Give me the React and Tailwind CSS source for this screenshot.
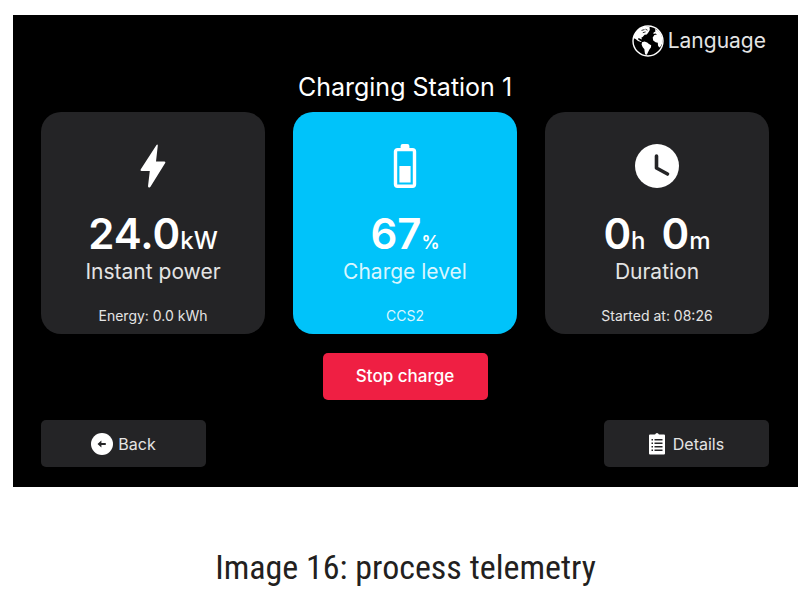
import React from 'react';

function GlobeIcon() {
  return (
    <svg viewBox="0 0 32 32" className="size-8" aria-hidden="true">
      <circle cx="16" cy="16" r="15" fill="#000" stroke="#fff" strokeWidth="1.4" />
      <g fill="#fff">
        <path d="M2 10.500C4 5.500 8 2.500 13 1.400L17.500 1.800 17.800 5 16.500 7.200 14.800 9.600 12.600 9.800 10.600 12 9.400 12.600 9.900 14.400 8.200 13.800 6.600 13 6 14.200 7.600 15.400 9.600 16.400 9 17 6 16 3.600 14 1.800 13.200Z" />
        <path d="M10 17.200 12.500 16.600 15.200 17.600 17 19 19.200 20.200 18.900 22.600 17.400 24.600 16 27.200 14.900 29.800 13.200 29.600 12.700 27 12.400 24.200 10.600 22 9.600 19.600Z" />
        <path d="M23 4 26 5.400C28.600 8 30.400 11 30.500 15L30.200 18.500 28.600 21.500 27.200 22.600 26 20.400 25.800 17.800 23.600 17.200 21.200 15.600 20.700 12.600 22.400 10 25 9.600 23.600 8.500 21.400 9 21.600 7.400 23.400 6.400Z" />
      </g>
      <path d="M9.500 5.400 12.500 4.600M10.800 7.700 13.600 6.900M13.500 4.200 15.500 5.200" stroke="#000" strokeWidth="0.8" fill="none" />
    </svg>
  );
}

function BoltIcon() {
  return (
    <svg viewBox="0 0 44 44" className="size-11" aria-hidden="true">
      <path d="M25.500 1 9.800 25.200Q9 27 10.600 27H18.800L17 42.300Q17.400 44.300 19.300 43L34.200 19Q34.800 17.400 33.200 17.400H25L26.800 1.600Q26.700 0 25.500 1Z" fill="#fff" />
    </svg>
  );
}

function BatteryIcon() {
  return (
    <svg viewBox="0 0 44 44" className="size-11" aria-hidden="true">
      <path d="M19.600 0H24.400Q26.400 0 26.400 2V5H17.600V2Q17.600 0 19.600 0Z" fill="#fff" />
      <rect x="12.500" y="5.600" width="19" height="36.700" rx="2" fill="none" stroke="#fff" strokeWidth="3.400" />
      <rect x="16.400" y="22" width="11.200" height="16.500" fill="#fff" />
    </svg>
  );
}

function ClockIcon() {
  return (
    <svg viewBox="0 0 44 44" className="size-11" aria-hidden="true">
      <circle cx="22" cy="22" r="22" fill="#fff" />
      <path d="M21.500 12V24L32.500 30" fill="none" stroke="#242426" strokeWidth="3.600" strokeLinecap="round" strokeLinejoin="round" />
    </svg>
  );
}

function BackIcon() {
  return (
    <svg viewBox="0 0 22 22" className="size-[22px]" aria-hidden="true">
      <circle cx="11" cy="11" r="11" fill="#fff" />
      <path d="M6.500 11 10.400 7.600V9.900H14.500Q15.600 11 14.500 12.100H10.400V14.400Z" fill="#242426" />
    </svg>
  );
}

function DetailsIcon() {
  return (
    <svg viewBox="0 0 16 22" className="h-[22px] w-4" aria-hidden="true">
      <path d="M1 1.500H5.500Q6.500 1.500 6.800 0.500Q8 -0.500 9.200 0.500Q9.500 1.500 10.500 1.500H15Q16 1.500 16 2.500V20.500Q16 21.500 15 21.500H1Q0 21.500 0 20.500V2.500Q0 1.500 1 1.500Z" fill="#fff" />
      <path d="M5.500 6.700H13.500M5.500 10.200H13.500M5.500 13.700H13.500M5.500 17.200H13.500M2.500 6.700H4M2.500 10.200H4M2.500 13.700H4M2.500 17.200H4" stroke="#242426" strokeWidth="1.500" />
    </svg>
  );
}

const cards = [
  {
    label: 'Instant power',
    parts: [{ value: '24.0', unit: 'kW' }],
    note: 'Energy: 0.0 kWh',
    icon: <BoltIcon />,
  },
  {
    label: 'Charge level',
    parts: [{ value: '67', unit: '%' }],
    note: 'CCS2',
    icon: <BatteryIcon />,
    active: true,
  },
  {
    label: 'Duration',
    parts: [{ value: '0', unit: 'h' }, { value: '0', unit: 'm' }],
    note: 'Started at: 08:26',
    icon: <ClockIcon />,
  },
];

function StatCard({ label, parts, note, icon, active }) {
  return (
    <section
      className={`flex flex-col items-center rounded-[20px] pt-8 pb-2 ${
        active ? 'bg-[#00c3fa] text-[#d9f6ff]' : 'bg-[#242426] text-[#e4e4e4]'
      }`}
    >
      {icon}
      <p className="mt-[22px] flex items-baseline gap-4 text-[42px] leading-[48px] font-semibold text-white">
        {parts.map((part) => (
          <span key={part.unit}>
            {part.value}
            <span className={active ? 'text-[18px] leading-none' : 'text-[24px] leading-none font-medium'}>{part.unit}</span>
          </span>
        ))}
      </p>
      <h2 className="text-[21px] leading-7">{label}</h2>
      <p className="mt-5 text-[14px] leading-5">{note}</p>
    </section>
  );
}

export default function App() {
  return (
    <div className="bg-white pt-[15px] pr-[11px] pl-[13px] font-['Inter',sans-serif]">
      <main className="bg-black pt-[10px] pr-[29px] pb-5 pl-7 text-[#e4e4e4]">
        <header className="flex justify-end pr-[3px]">
          <button type="button" className="flex items-center gap-1 text-[21px] leading-8">
            <GlobeIcon />
            Language
          </button>
        </header>

        <h1 className="mt-[14px] mb-[9px] text-center text-[25px] leading-8 text-white">Charging Station 1</h1>

        <div className="grid grid-cols-3 gap-7">
          {cards.map((card) => (
            <StatCard key={card.label} {...card} />
          ))}
        </div>

        <div className="mt-[19px] flex justify-center">
          <button type="button" className="h-[47px] w-[165px] rounded-[5px] bg-[#ef1f43] text-[17px] font-medium text-white">
            Stop charge
          </button>
        </div>

        <nav className="mt-5 flex justify-between">
          <button type="button" className="flex h-[47px] w-[165px] items-center justify-center gap-[5px] rounded-[5px] bg-[#242426] text-[16px]">
            <BackIcon />
            Back
          </button>
          <button type="button" className="flex h-[47px] w-[165px] items-center justify-center gap-2 rounded-[5px] bg-[#242426] text-[16px]">
            <DetailsIcon />
            Details
          </button>
        </nav>
      </main>

      <p className="mt-14 text-center font-['Roboto_Condensed','Open_Sans_Condensed',sans-serif] text-[34px] leading-[48px] text-[#231f20]">
        Image 16: process telemetry
      </p>
    </div>
  );
}
